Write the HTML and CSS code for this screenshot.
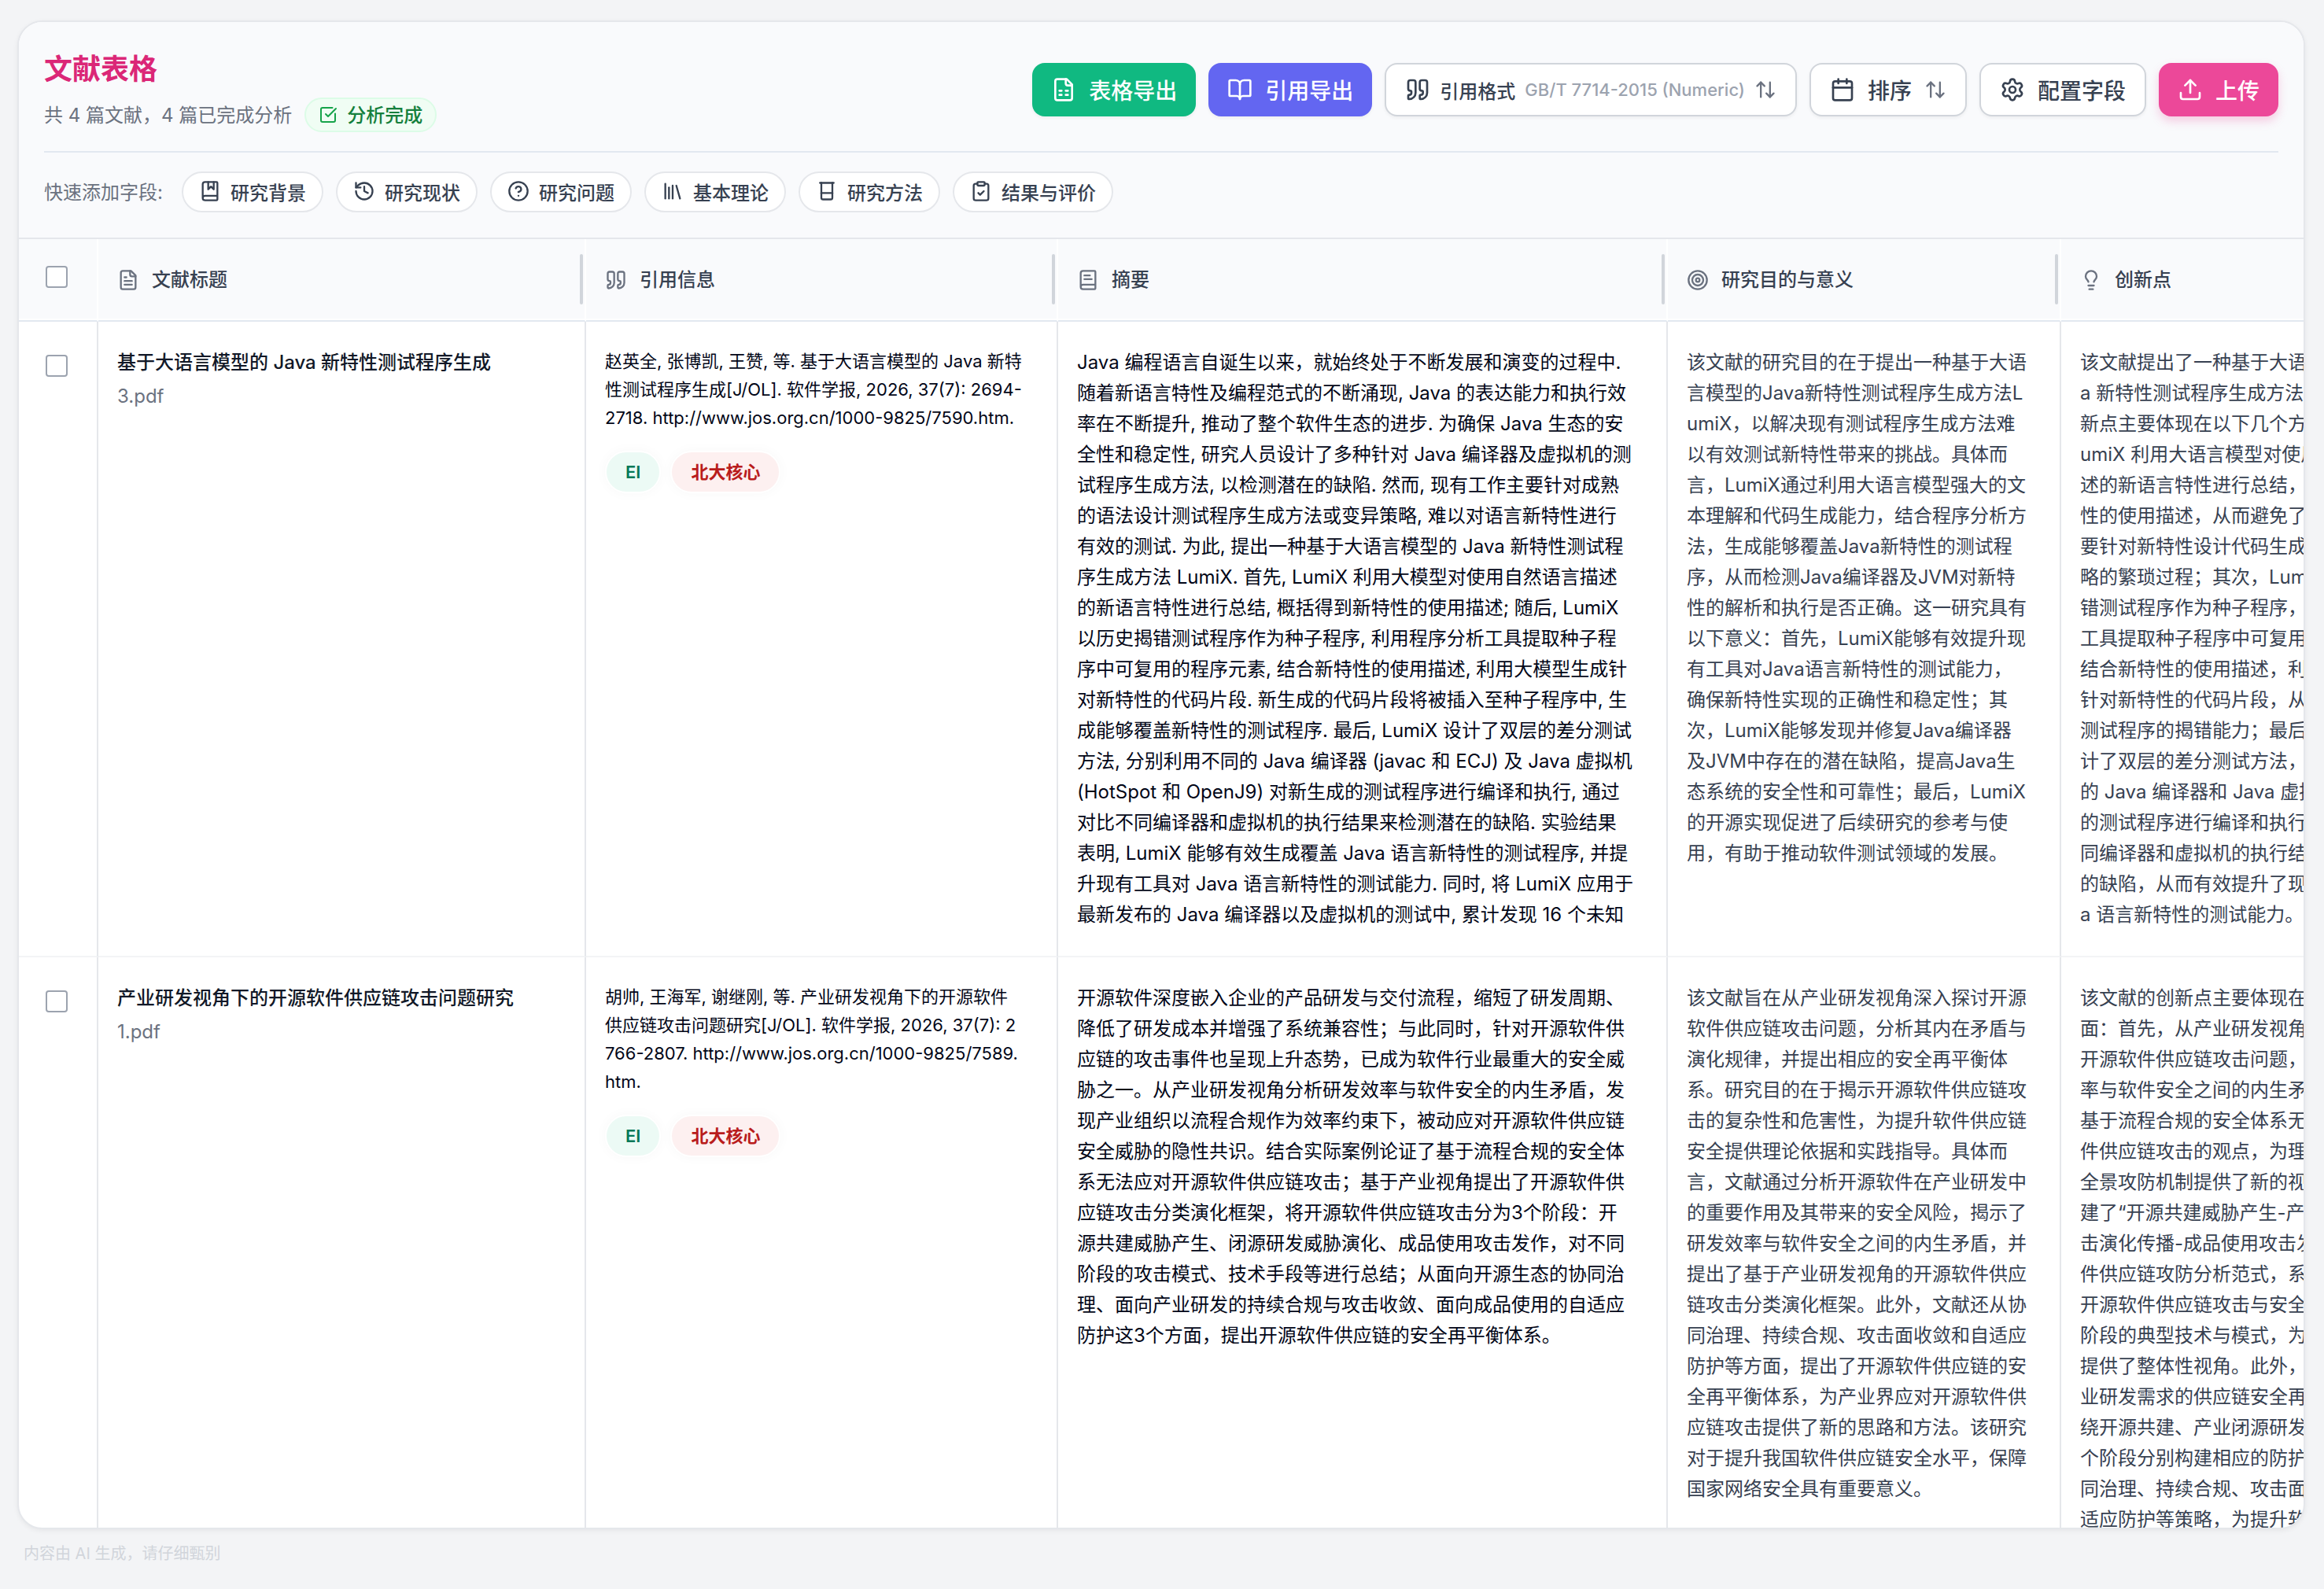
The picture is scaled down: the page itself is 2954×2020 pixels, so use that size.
FILE: index.html
```html
<!DOCTYPE html>
<html lang="zh-CN">
<head>
    <meta charset="UTF-8" />
    <meta name="viewport" content="width=device-width, initial-scale=1.0"/>
    <title>文献表格</title>
    <link rel="stylesheet" href="styles.css">
</head>
<body>
    <main class="card">
        <header class="card-header">
            <div class="header-top">
                <div class="heading">
                    <h1>文献表格</h1>
                    <div class="summary">
                        <span>共 4 篇文献，4 篇已完成分析</span>
                        <span class="status">
                            <svg class="icon icon-sm" viewBox="0 0 24 24"><path d="M21 10.5V19a2 2 0 0 1-2 2H5a2 2 0 0 1-2-2V5a2 2 0 0 1 2-2h12.5"/><path d="m9 11 3 3L22 4"/></svg>
                            分析完成
                        </span>
                    </div>
                </div>
                <div class="actions">
                    <button type="button" class="btn btn-green">
                        <svg class="icon icon-lg" viewBox="0 0 24 24"><path d="M15 2H6a2 2 0 0 0-2 2v16a2 2 0 0 0 2 2h12a2 2 0 0 0 2-2V7Z"/><path d="M14 2v4a2 2 0 0 0 2 2h4"/><path d="M8 13h2M14 13h2M8 17h2M14 17h2"/></svg>
                        表格导出
                    </button>
                    <button type="button" class="btn btn-indigo">
                        <svg class="icon icon-lg" viewBox="0 0 24 24"><path d="M12 7v14"/><path d="M3 18a1 1 0 0 1-1-1V4a1 1 0 0 1 1-1h5a4 4 0 0 1 4 4 4 4 0 0 1 4-4h5a1 1 0 0 1 1 1v13a1 1 0 0 1-1 1h-6a3 3 0 0 0-3 3 3 3 0 0 0-3-3z"/></svg>
                        引用导出
                    </button>
                    <button type="button" class="btn btn-outline btn-format">
                        <svg class="icon icon-lg" viewBox="0 0 24 24"><path d="M16 3a2 2 0 0 0-2 2v6a2 2 0 0 0 2 2 1 1 0 0 1 1 1v1a2 2 0 0 1-2 2 1 1 0 0 0-1 1v2a1 1 0 0 0 1 1 6 6 0 0 0 6-6V5a2 2 0 0 0-2-2z"/><path d="M5 3a2 2 0 0 0-2 2v6a2 2 0 0 0 2 2 1 1 0 0 1 1 1v1a2 2 0 0 1-2 2 1 1 0 0 0-1 1v2a1 1 0 0 0 1 1 6 6 0 0 0 6-6V5a2 2 0 0 0-2-2z"/></svg>
                        引用格式
                        <span class="format-name">GB/T 7714-2015 (Numeric)</span>
                        <svg class="icon arrows" viewBox="0 0 24 24"><path d="m21 16-4 4-4-4"/><path d="M17 20V4"/><path d="m3 8 4-4 4 4"/><path d="M7 4v16"/></svg>
                    </button>
                    <button type="button" class="btn btn-outline">
                        <svg class="icon icon-lg" viewBox="0 0 24 24"><path d="M8 2v4M16 2v4"/><rect width="18" height="18" x="3" y="4" rx="2"/><path d="M3 10h18"/></svg>
                        排序
                        <svg class="icon arrows" viewBox="0 0 24 24"><path d="m21 16-4 4-4-4"/><path d="M17 20V4"/><path d="m3 8 4-4 4 4"/><path d="M7 4v16"/></svg>
                    </button>
                    <button type="button" class="btn btn-outline">
                        <svg class="icon icon-lg" viewBox="0 0 24 24"><path d="M9.671 4.136a2.34 2.34 0 0 1 4.659 0 2.34 2.34 0 0 0 3.319 1.915 2.34 2.34 0 0 1 2.33 4.033 2.34 2.34 0 0 0 0 3.831 2.34 2.34 0 0 1-2.33 4.033 2.34 2.34 0 0 0-3.319 1.915 2.34 2.34 0 0 1-4.659 0 2.34 2.34 0 0 0-3.32-1.915 2.34 2.34 0 0 1-2.33-4.033 2.34 2.34 0 0 0 0-3.831A2.34 2.34 0 0 1 6.35 6.051a2.34 2.34 0 0 0 3.319-1.915"/><circle cx="12" cy="12" r="3"/></svg>
                        配置字段
                    </button>
                    <button type="button" class="btn btn-pink">
                        <svg class="icon icon-lg" viewBox="0 0 24 24"><path d="M12 3v12"/><path d="m17 8-5-5-5 5"/><path d="M21 15v4a2 2 0 0 1-2 2H5a2 2 0 0 1-2-2v-4"/></svg>
                        上传
                    </button>
                </div>
            </div>

            <div class="quick-fields">
                <span class="quick-label">快速添加字段:</span>
                <button type="button" class="pill">
                    <svg class="icon" viewBox="0 0 24 24"><path d="M10 2v8l3-3 3 3V2"/><path d="M4 19.5v-15A2.5 2.5 0 0 1 6.5 2H19a1 1 0 0 1 1 1v18a1 1 0 0 1-1 1H6.5a1 1 0 0 1 0-5H20"/></svg>
                    研究背景
                </button>
                <button type="button" class="pill">
                    <svg class="icon" viewBox="0 0 24 24"><path d="M3 12a9 9 0 1 0 9-9 9.75 9.75 0 0 0-6.74 2.74L3 8"/><path d="M3 3v5h5"/><path d="M12 7v5l4 2"/></svg>
                    研究现状
                </button>
                <button type="button" class="pill">
                    <svg class="icon" viewBox="0 0 24 24"><circle cx="12" cy="12" r="10"/><path d="M9.09 9a3 3 0 0 1 5.83 1c0 2-3 3-3 3"/><path d="M12 17h.01"/></svg>
                    研究问题
                </button>
                <button type="button" class="pill">
                    <svg class="icon" viewBox="0 0 24 24"><path d="m16 6 4 14"/><path d="M12 6v14"/><path d="M8 8v12"/><path d="M4 4v16"/></svg>
                    基本理论
                </button>
                <button type="button" class="pill">
                    <svg class="icon" viewBox="0 0 24 24"><path d="M4.5 3h15"/><path d="M6 3v16a2 2 0 0 0 2 2h8a2 2 0 0 0 2-2V3"/><path d="M6 14h12"/></svg>
                    研究方法
                </button>
                <button type="button" class="pill">
                    <svg class="icon" viewBox="0 0 24 24"><rect width="8" height="4" x="8" y="2" rx="1"/><path d="M16 4h2a2 2 0 0 1 2 2v14a2 2 0 0 1-2 2H6a2 2 0 0 1-2-2V6a2 2 0 0 1 2-2h2"/><path d="m9 14 2 2 4-4"/></svg>
                    结果与评价
                </button>
            </div>
        </header>

        <div class="table-wrap">
            <table class="papers">
                <colgroup>
                    <col class="col-check">
                    <col class="col-title">
                    <col class="col-cite">
                    <col class="col-abstract">
                    <col class="col-field">
                    <col class="col-field">
                </colgroup>
                <thead>
                    <tr>
                        <th class="check-cell"><input type="checkbox" aria-label="全选"></th>
                        <th>
                            <div class="th-inner">
                                <svg class="icon" viewBox="0 0 24 24"><path d="M15 2H6a2 2 0 0 0-2 2v16a2 2 0 0 0 2 2h12a2 2 0 0 0 2-2V7Z"/><path d="M14 2v4a2 2 0 0 0 2 2h4"/><path d="M10 9H8M16 13H8M16 17H8"/></svg>
                                文献标题
                            </div>
                            <span class="resizer"></span>
                        </th>
                        <th>
                            <div class="th-inner">
                                <svg class="icon" viewBox="0 0 24 24"><path d="M16 3a2 2 0 0 0-2 2v6a2 2 0 0 0 2 2 1 1 0 0 1 1 1v1a2 2 0 0 1-2 2 1 1 0 0 0-1 1v2a1 1 0 0 0 1 1 6 6 0 0 0 6-6V5a2 2 0 0 0-2-2z"/><path d="M5 3a2 2 0 0 0-2 2v6a2 2 0 0 0 2 2 1 1 0 0 1 1 1v1a2 2 0 0 1-2 2 1 1 0 0 0-1 1v2a1 1 0 0 0 1 1 6 6 0 0 0 6-6V5a2 2 0 0 0-2-2z"/></svg>
                                引用信息
                            </div>
                            <span class="resizer"></span>
                        </th>
                        <th>
                            <div class="th-inner">
                                <svg class="icon" viewBox="0 0 24 24"><path d="M4 19.5v-15A2.5 2.5 0 0 1 6.5 2H19a1 1 0 0 1 1 1v18a1 1 0 0 1-1 1H6.5a1 1 0 0 1 0-5H20"/><path d="M8 11h8M8 7h6"/></svg>
                                摘要
                            </div>
                            <span class="resizer"></span>
                        </th>
                        <th>
                            <div class="th-inner">
                                <svg class="icon" viewBox="0 0 24 24"><circle cx="12" cy="12" r="10"/><circle cx="12" cy="12" r="6"/><circle cx="12" cy="12" r="2"/></svg>
                                研究目的与意义
                            </div>
                            <span class="resizer"></span>
                        </th>
                        <th>
                            <div class="th-inner">
                                <svg class="icon" viewBox="0 0 24 24"><path d="M15 14c.2-1 .7-1.7 1.5-2.5 1-.9 1.5-2.2 1.5-3.5A6 6 0 0 0 6 8c0 1 .2 2.2 1.5 3.5.7.7 1.3 1.5 1.5 2.5"/><path d="M9 18h6"/><path d="M10 22h4"/></svg>
                                创新点
                            </div>
                        </th>
                    </tr>
                </thead>
                <tbody>
                    <tr>
                        <td class="check-cell"><input type="checkbox" aria-label="选择 3.pdf"></td>
                        <td>
                            <div class="paper-title">基于大语言模型的 Java 新特性测试程序生成</div>
                            <div class="paper-file">3.pdf</div>
                        </td>
                        <td>
                            <p class="cite">赵英全, 张博凯, 王赞, 等. 基于大语言模型的 Java 新特性测试程序生成[J/OL]. 软件学报, 2026, 37(7): 2694-<wbr>2718. http://www.jos.org.cn/1000-9825/7590.htm.</p>
                            <div class="tags"><span class="tag tag-green">EI</span><span class="tag tag-red">北大核心</span></div>
                        </td>
                        <td>
                            <p class="abstract">Java 编程语言自诞生以来，就始终处于不断发展和演变的过程中. 随着新语言特性及编程范式的不断涌现, Java 的表达能力和执行效率在不断提升, 推动了整个软件生态的进步. 为确保 Java 生态的安全性和稳定性, 研究人员设计了多种针对 Java 编译器及虚拟机的测试程序生成方法, 以检测潜在的缺陷. 然而, 现有工作主要针对成熟的语法设计测试程序生成方法或变异策略, 难以对语言新特性进行有效的测试. 为此, 提出一种基于大语言模型的 Java 新特性测试程序生成方法 LumiX. 首先, LumiX 利用大模型对使用自然语言描述的新语言特性进行总结, 概括得到新特性的使用描述; 随后, LumiX 以历史揭错测试程序作为种子程序, 利用程序分析工具提取种子程序中可复用的程序元素, 结合新特性的使用描述, 利用大模型生成针对新特性的代码片段. 新生成的代码片段将被插入至种子程序中, 生成能够覆盖新特性的测试程序. 最后, LumiX 设计了双层的差分测试方法, 分别利用不同的 Java 编译器 (javac 和 ECJ) 及 Java 虚拟机 (HotSpot 和 OpenJ9) 对新生成的测试程序进行编译和执行, 通过对比不同编译器和虚拟机的执行结果来检测潜在的缺陷. 实验结果表明, LumiX 能够有效生成覆盖 Java 语言新特性的测试程序, 并提升现有工具对 Java 语言新特性的测试能力. 同时, 将 LumiX 应用于最新发布的 Java 编译器以及虚拟机的测试中, 累计发现 16 个未知</p>
                        </td>
                        <td>
                            <p class="field">该文献的研究目的在于提出一种基于大语言模型的Java新特性测试程序生成方法LumiX，以解决现有测试程序生成方法难以有效测试新特性带来的挑战。具体而言，LumiX通过利用大语言模型强大的文本理解和代码生成能力，结合程序分析方法，生成能够覆盖Java新特性的测试程序，从而检测Java编译器及JVM对新特性的解析和执行是否正确。这一研究具有以下意义：首先，LumiX能够有效提升现有工具对Java语言新特性的测试能力，确保新特性实现的正确性和稳定性；其次，LumiX能够发现并修复Java编译器及JVM中存在的潜在缺陷，提高Java生态系统的安全性和可靠性；最后，LumiX的开源实现促进了后续研究的参考与使用，有助于推动软件测试领域的发展。</p>
                        </td>
                        <td>
                            <p class="field field-lines">该文献提出了一种基于大语言模型的 Jav
a 新特性测试程序生成方法 LumiX，其创
新点主要体现在以下几个方面：首先，L
umiX 利用大语言模型对使用自然语言描
述的新语言特性进行总结，得到新特
性的使用描述，从而避免了人工需
要针对新特性设计代码生成策
略的繁琐过程；其次，LumiX 以历史揭
错测试程序作为种子程序，利用程序分析
工具提取种子程序中可复用的程序元素，
结合新特性的使用描述，利用大模型生成
针对新特性的代码片段，从而提升了
测试程序的揭错能力；最后，LumiX 设
计了双层的差分测试方法，分别利用不同
的 Java 编译器和 Java 虚拟机对新生成
的测试程序进行编译和执行，通过对比不
同编译器和虚拟机的执行结果来检测潜在
的缺陷，从而有效提升了现有工具对 Jav
a 语言新特性的测试能力。</p>
                        </td>
                    </tr>
                    <tr>
                        <td class="check-cell"><input type="checkbox" aria-label="选择 1.pdf"></td>
                        <td>
                            <div class="paper-title">产业研发视角下的开源软件供应链攻击问题研究</div>
                            <div class="paper-file">1.pdf</div>
                        </td>
                        <td>
                            <p class="cite">胡帅, 王海军, 谢继刚, 等. 产业研发视角下的开源软件供应链攻击问题研究[J/OL]. 软件学报, 2026, 37(7): 2766-2807. http://www.jos.org.cn/1000-9825/7589.htm.</p>
                            <div class="tags"><span class="tag tag-green">EI</span><span class="tag tag-red">北大核心</span></div>
                        </td>
                        <td>
                            <p class="abstract">开源软件深度嵌入企业的产品研发与交付流程，缩短了研发周期、降低了研发成本并增强了系统兼容性；与此同时，针对开源软件供应链的攻击事件也呈现上升态势，已成为软件行业最重大的安全威胁之一。从产业研发视角分析研发效率与软件安全的内生矛盾，发现产业组织以流程合规作为效率约束下，被动应对开源软件供应链安全威胁的隐性共识。结合实际案例论证了基于流程合规的安全体系无法应对开源软件供应链攻击；基于产业视角提出了开源软件供应链攻击分类演化框架，将开源软件供应链攻击分为3个阶段：开源共建威胁产生、闭源研发威胁演化、成品使用攻击发作，对不同阶段的攻击模式、技术手段等进行总结；从面向开源生态的协同治理、面向产业研发的持续合规与攻击收敛、面向成品使用的自适应防护这3个方面，提出开源软件供应链的安全再平衡体系。</p>
                        </td>
                        <td>
                            <p class="field">该文献旨在从产业研发视角深入探讨开源软件供应链攻击问题，分析其内在矛盾与演化规律，并提出相应的安全再平衡体系。研究目的在于揭示开源软件供应链攻击的复杂性和危害性，为提升软件供应链安全提供理论依据和实践指导。具体而言，文献通过分析开源软件在产业研发中的重要作用及其带来的安全风险，揭示了研发效率与软件安全之间的内生矛盾，并提出了基于产业研发视角的开源软件供应链攻击分类演化框架。此外，文献还从协同治理、持续合规、攻击面收敛和自适应防护等方面，提出了开源软件供应链的安全再平衡体系，为产业界应对开源软件供应链攻击提供了新的思路和方法。该研究对于提升我国软件供应链安全水平，保障国家网络安全具有重要意义。</p>
                        </td>
                        <td>
                            <p class="field field-lines">该文献的创新点主要体现在以下几个方
面：首先，从产业研发视角出发，分析
开源软件供应链攻击问题，揭示了研发效
率与软件安全之间的内生矛盾，提出了
基于流程合规的安全体系无法应对开源软
件供应链攻击的观点，为理解供应链安全
全景攻防机制提供了新的视角。其次，构
建了“开源共建威胁产生-产业研发攻
击演化传播-成品使用攻击发作”的开源软
件供应链攻防分析范式，系统总结了
开源软件供应链攻击与安全防护在不同
阶段的典型技术与模式，为产业界
提供了整体性视角。此外，面向产
业研发需求的供应链安全再平衡体系，围
绕开源共建、产业闭源研发和成品使用三
个阶段分别构建相应的防护体系，提出协
同治理、持续合规、攻击面收敛和自
适应防护等策略，为提升软件供应链安全
水平提供了参考。</p>
                        </td>
                    </tr>
                </tbody>
            </table>
        </div>
    </main>

    <footer class="notice">内容由 AI 生成，请仔细甄别</footer>
</body>
</html>
```

FILE: styles.css
```css
* {
    margin: 0;
    padding: 0;
    box-sizing: border-box;
}

body {
    display: flex;
    flex-direction: column;
    height: 100vh;
    padding: 26px 24px 0 22px;
    overflow: hidden;
    background-color: #f3f4f6;
    color: #374151;
    font-family: Inter, "Noto Sans CJK SC", sans-serif;
    font-size: 24px;
    line-height: 39px;
    text-spacing-trim: space-all;
}

button {
    font-family: inherit;
    cursor: pointer;
}

.icon {
    width: 28px;
    height: 28px;
    flex-shrink: 0;
    fill: none;
    stroke: currentColor;
    stroke-width: 2;
    stroke-linecap: round;
    stroke-linejoin: round;
}

.icon-sm {
    width: 24px;
    height: 24px;
}

.icon-lg {
    width: 32px;
    height: 32px;
}

/* Card */
.card {
    display: flex;
    flex-direction: column;
    flex: 1;
    min-height: 0;
    overflow: hidden;
    background-color: #fff;
    border: 2px solid #e5e7eb;
    border-radius: 32px;
    box-shadow: 0 2px 6px rgba(0, 0, 0, 0.06);
}

.card-header {
    padding: 32px 32px 0;
    background-color: #f9fafc;
    border-bottom: 2px solid #e5e7eb;
}

.header-top {
    display: flex;
    justify-content: space-between;
    align-items: center;
    padding-bottom: 24px;
    border-bottom: 2px solid #e2e8f0;
}

.heading h1 {
    margin-bottom: 8px;
    font-size: 36px;
    font-weight: 600;
    line-height: 56px;
    color: #db2777;
}

.summary {
    display: flex;
    align-items: center;
    gap: 16px;
    color: #6b7280;
}

.status {
    display: flex;
    align-items: center;
    gap: 12px;
    height: 44px;
    padding: 0 16px;
    border: 2px solid #dcfce7;
    border-radius: 22px;
    background-color: #f0fdf4;
    color: #15803d;
    font-weight: 500;
}

.status .icon {
    color: #16a34a;
}

/* Buttons */
.actions {
    display: flex;
    gap: 16px;
}

.btn {
    display: flex;
    align-items: center;
    gap: 16px;
    height: 68px;
    padding: 0 24px;
    border: none;
    border-radius: 16px;
    color: #fff;
    font-size: 28px;
    font-weight: 500;
    white-space: nowrap;
    box-shadow: 0 2px 4px rgba(0, 0, 0, 0.05);
}

.btn-green {
    background-color: #10b981;
}

.btn-indigo {
    background-color: #6366f1;
}

.btn-pink {
    background-color: #ec4899;
    box-shadow: 0 6px 12px rgba(236, 72, 153, 0.25);
}

.btn-outline {
    border: 2px solid #d1d5db;
    background-color: #fff;
    color: #374151;
}

.btn-format {
    gap: 12px;
    font-size: 24px;
}

.format-name {
    color: #9ca3af;
    font-size: 22px;
}

.arrows {
    color: #6b7280;
}

/* Quick fields */
.quick-fields {
    display: flex;
    align-items: center;
    gap: 16px;
    padding: 24px 0 32px;
}

.quick-label {
    margin-right: 8px;
    color: #6b7280;
}

.pill {
    display: flex;
    align-items: center;
    gap: 12px;
    height: 52px;
    padding: 0 20px 2px;
    border: 2px solid #e5e7eb;
    border-radius: 26px;
    background-color: #fff;
    color: #374151;
    font-size: 24px;
    font-weight: 500;
}

/* Table */
.table-wrap {
    flex: 1;
    min-height: 0;
    overflow: hidden;
}

.papers {
    width: 3096px;
    table-layout: fixed;
    border-collapse: separate;
    border-spacing: 0;
}

.col-check {
    width: 101px;
}

.col-title {
    width: 620px;
}

.col-cite {
    width: 600px;
}

.col-abstract {
    width: 775px;
}

.col-field {
    width: 500px;
}

.papers th {
    position: relative;
    height: 105px;
    padding: 0 24px;
    background-color: #f9fafc;
    border-right: 2px solid #fff;
    border-bottom: 2px solid #e2e8f0;
    box-shadow: inset 0 -2px 0 #fff;
    font-weight: 500;
    text-align: left;
}

.th-inner {
    display: flex;
    align-items: center;
    gap: 16px;
}

.th-inner .icon {
    color: #6b7280;
}

/* Drag handle on the column's right edge */
.resizer {
    position: absolute;
    top: 19px;
    right: 2px;
    width: 4px;
    height: 64px;
    border-radius: 2px;
    background-color: #d1d5db;
    cursor: col-resize;
}

.papers td {
    padding: 32px 24px 33px;
    border-right: 2px solid #e5e7eb;
    border-bottom: 2px solid #f3f4f6;
    vertical-align: top;
}

.papers th.check-cell {
    padding: 34px 34px 0;
    vertical-align: top;
}

.papers td.check-cell {
    padding: 42px 34px 0;
}

.check-cell input {
    display: block;
    appearance: none;
    width: 28px;
    height: 28px;
    border: 2px solid #9ca3af;
    border-radius: 4px;
    background-color: #fff;
}

.paper-title {
    color: #111827;
    font-weight: 500;
}

.paper-file {
    margin-top: 4px;
    color: #6b7280;
}

.cite,
.abstract,
.field {
    padding-right: 16px;
    word-break: break-all;
}

.cite {
    color: #020617;
    font-size: 22px;
    line-height: 36px;
}

.abstract {
    color: #020617;
}

.field-lines {
    padding-right: 0;
    white-space: pre;
}

.tags {
    display: flex;
    gap: 12px;
    margin-top: 24px;
}

.tag {
    height: 54px;
    padding: 0 24px;
    border: 2px solid #fff;
    border-radius: 27px;
    font-size: 22px;
    font-weight: 600;
    line-height: 50px;
    box-shadow: 0 0 16px rgba(0, 0, 0, 0.03);
}

.tag-green {
    background-color: #ecfaf5;
    color: #047857;
}

.tag-red {
    background-color: #fdf0f0;
    color: #b91c1c;
}

/* Footer */
.notice {
    height: 76px;
    padding: 16px 8px;
    color: #d1d5db;
    font-size: 20px;
    line-height: 30px;
}
```
